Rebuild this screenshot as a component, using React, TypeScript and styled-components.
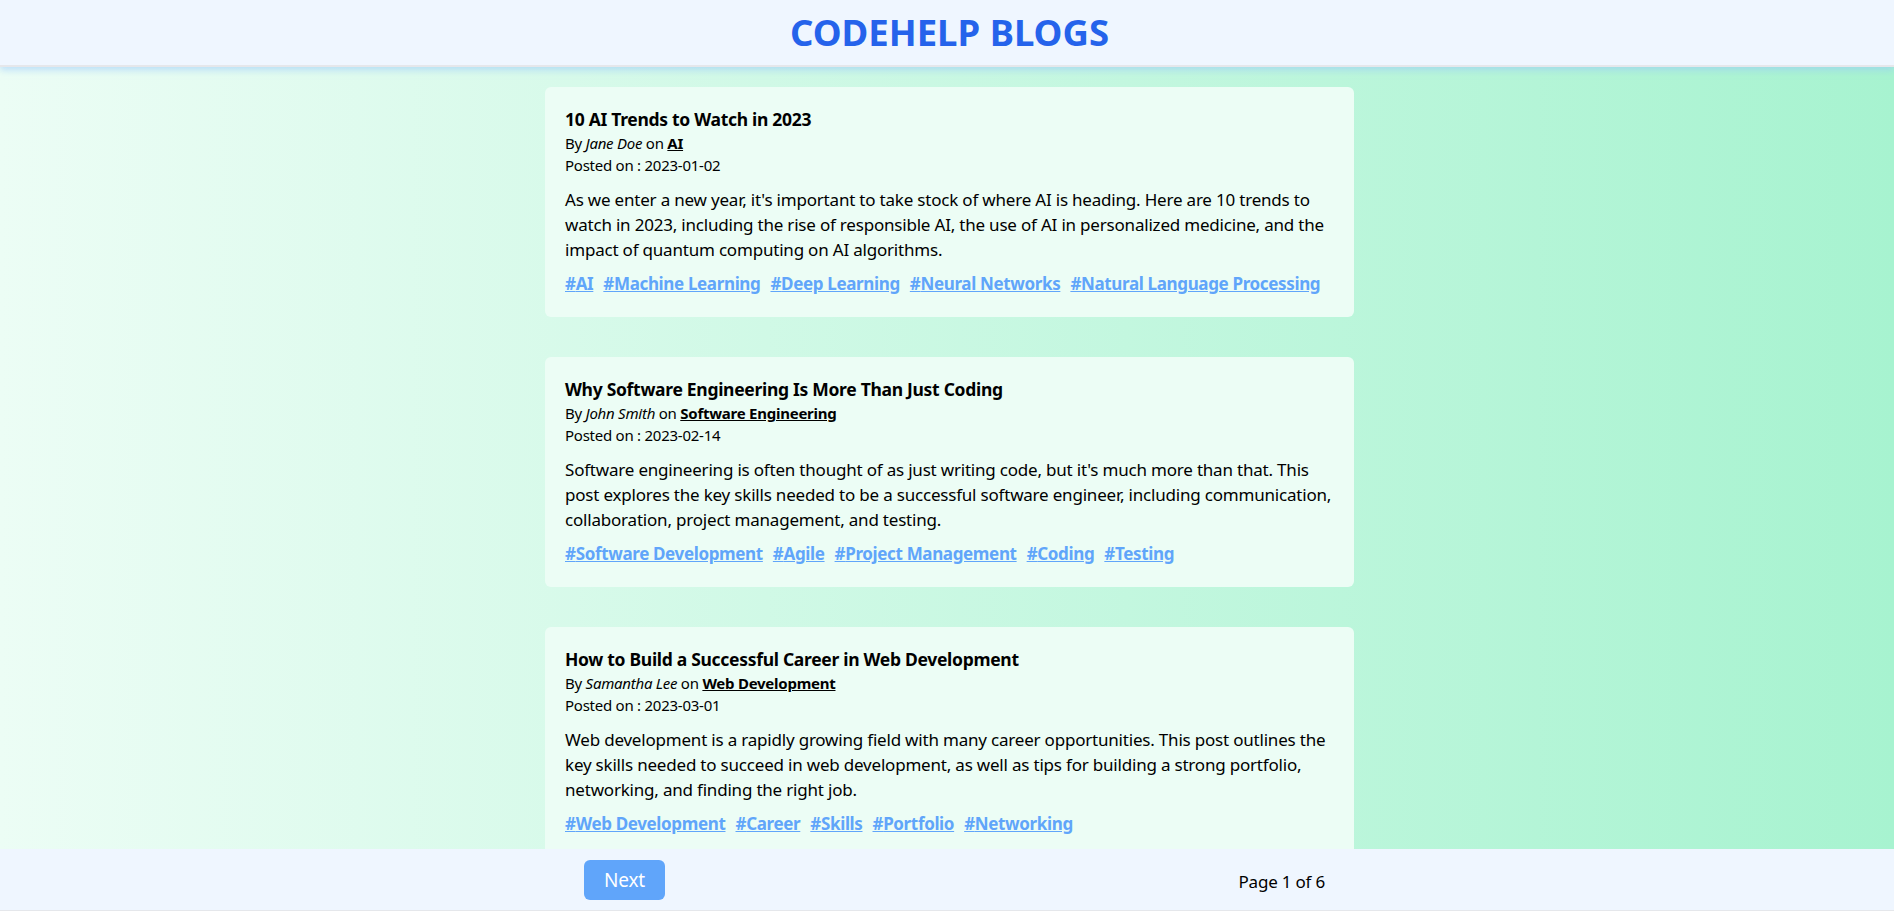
import React from "react";
import styled, { createGlobalStyle } from "styled-components";

const GlobalStyle = createGlobalStyle`
  html, body {
    margin: 0;
    padding: 0;
    height: 100%;
  }
  body {
    font-family: "Noto Sans", "Open Sans", Arial, sans-serif;
    color: #0a0a0a;
    overflow: hidden;
  }
  * { box-sizing: border-box; }
`;

const Shell = styled.div`
  height: 100vh;
  display: flex;
  flex-direction: column;
  background: linear-gradient(to right, #ecfdf5 0%, #a7f3d0 100%);
`;

const Header = styled.header`
  flex: 0 0 67px;
  display: flex;
  align-items: center;
  justify-content: center;
  padding-left: 5px;
  background: #eff6ff;
  border-bottom: 2px solid #e5e7eb;
  box-shadow: 0 3px 7px rgba(147, 197, 253, 0.55);
  position: relative;
  z-index: 2;
`;

const Brand = styled.h1`
  margin: 0;
  font-size: 36.5px;
  font-weight: 700;
  color: #2563eb;
  line-height: 1;
`;

const Main = styled.main`
  flex: 1 1 auto;
  overflow: hidden;
  display: flex;
  flex-direction: column;
  align-items: center;
  gap: 40px;
  padding: 20px 0 0 5px;
`;

const Card = styled.article`
  flex-shrink: 0;
  width: 809px;
  background: #ecfdf5;
  border-radius: 6px;
  padding: 20px 20px 21px;
`;

const Title = styled.h2`
  margin: 0;
  font-size: 17.5px;
  letter-spacing: -0.3px;
  line-height: 25px;
  font-weight: 700;
  color: #000;
`;

const Meta = styled.p`
  margin: 0;
  font-size: 15px;
  letter-spacing: -0.25px;
  line-height: 22px;
  color: #000;

  em { font-style: italic; }
  strong { font-weight: 700; text-decoration: underline; }
`;

const Body = styled.p`
  margin: 11px 0 0;
  font-size: 17px;
  letter-spacing: -0.2px;
  line-height: 25px;
  color: #000;
`;

const Tags = styled.div`
  margin-top: 9px;
  font-size: 17px;
  letter-spacing: -0.35px;
  line-height: 25px;
`;

const Tag = styled.a`
  color: #60a5fa;
  font-weight: 700;
  text-decoration: underline;
  margin-right: 10px;
  cursor: pointer;
`;

const Footer = styled.footer`
  flex: 0 0 62px;
  display: flex;
  justify-content: center;
  padding-left: 5px;
  background: #eff6ff;
  border-bottom: 1px solid #e5e7eb;
  position: relative;
  z-index: 2;
`;

const FooterInner = styled.div`
  width: 809px;
  display: flex;
  align-items: center;
  justify-content: space-between;
  padding: 0 29px 0 39px;
`;

const NextButton = styled.button`
  width: 81px;
  height: 40px;
  border: none;
  border-radius: 6px;
  background: #60a5fa;
  color: #fff;
  font-family: inherit;
  font-size: 19px;
  letter-spacing: -0.2px;
  cursor: pointer;
`;

const PageInfo = styled.span`
  font-size: 17px;
  letter-spacing: -0.2px;
  color: #000;
  margin-top: 4px;
`;

type Post = {
  title: string;
  author: string;
  category: string;
  date: string;
  content: string;
  tags: string[];
};

const posts: Post[] = [
  {
    title: "10 AI Trends to Watch in 2023",
    author: "Jane Doe",
    category: "AI",
    date: "2023-01-02",
    content:
      "As we enter a new year, it's important to take stock of where AI is heading. Here are 10 trends to watch in 2023, including the rise of responsible AI, the use of AI in personalized medicine, and the impact of quantum computing on AI algorithms.",
    tags: ["AI", "Machine Learning", "Deep Learning", "Neural Networks", "Natural Language Processing"],
  },
  {
    title: "Why Software Engineering Is More Than Just Coding",
    author: "John Smith",
    category: "Software Engineering",
    date: "2023-02-14",
    content:
      "Software engineering is often thought of as just writing code, but it's much more than that. This post explores the key skills needed to be a successful software engineer, including communication, collaboration, project management, and testing.",
    tags: ["Software Development", "Agile", "Project Management", "Coding", "Testing"],
  },
  {
    title: "How to Build a Successful Career in Web Development",
    author: "Samantha Lee",
    category: "Web Development",
    date: "2023-03-01",
    content:
      "Web development is a rapidly growing field with many career opportunities. This post outlines the key skills needed to succeed in web development, as well as tips for building a strong portfolio, networking, and finding the right job.",
    tags: ["Web Development", "Career", "Skills", "Portfolio", "Networking"],
  },
];

export default function App() {
  return (
    <>
      <GlobalStyle />
      <Shell>
        <Header>
          <Brand>CODEHELP BLOGS</Brand>
        </Header>
        <Main>
          {posts.map((p) => (
            <Card key={p.title}>
              <Title>{p.title}</Title>
              <Meta>
                By <em>{p.author}</em> on <strong>{p.category}</strong>
              </Meta>
              <Meta>Posted on : {p.date}</Meta>
              <Body>{p.content}</Body>
              <Tags>
                {p.tags.map((t) => (
                  <Tag key={t}>#{t}</Tag>
                ))}
              </Tags>
            </Card>
          ))}
        </Main>
        <Footer>
          <FooterInner>
            <NextButton>Next</NextButton>
            <PageInfo>Page 1 of 6</PageInfo>
          </FooterInner>
        </Footer>
      </Shell>
    </>
  );
}
